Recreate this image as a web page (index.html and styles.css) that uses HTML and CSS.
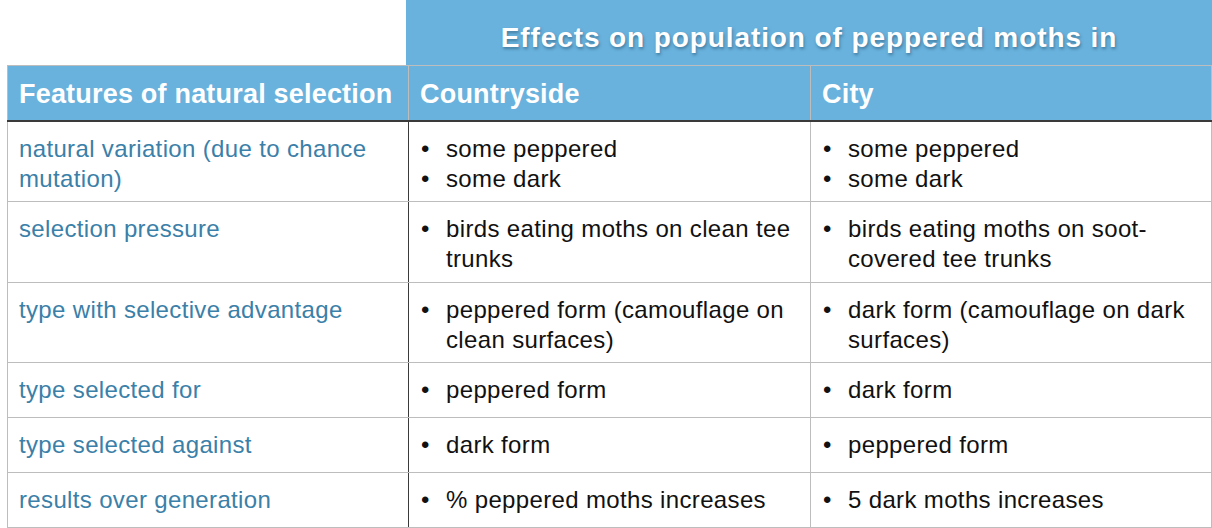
FILE: index.html
```html
<!DOCTYPE html>
<html>
<head>
<meta charset="utf-8">
<link rel="stylesheet" href="styles.css">
</head>
<body>
<div class="page">
  <div class="banner-row">
    <div class="spacer"></div>
    <div class="banner">Effects on population of peppered moths in</div>
  </div>
  <table class="grid">
    <colgroup><col class="c1"><col class="c2"><col class="c3"></colgroup>
    <thead>
      <tr>
        <th>Features of natural selection</th>
        <th>Countryside</th>
        <th>City</th>
      </tr>
    </thead>
    <tbody>
      <tr class="tall">
        <td class="feat">natural variation (due to chance mutation)</td>
        <td><ul><li>some peppered</li><li>some dark</li></ul></td>
        <td><ul><li>some peppered</li><li>some dark</li></ul></td>
      </tr>
      <tr class="tall">
        <td class="feat">selection pressure</td>
        <td><ul><li>birds eating moths on clean tee trunks</li></ul></td>
        <td><ul><li>birds eating moths on soot-covered tee trunks</li></ul></td>
      </tr>
      <tr class="tall">
        <td class="feat">type with selective advantage</td>
        <td><ul><li>peppered form (camouflage on clean surfaces)</li></ul></td>
        <td><ul><li>dark form (camouflage on dark surfaces)</li></ul></td>
      </tr>
      <tr class="short">
        <td class="feat">type selected for</td>
        <td><ul><li>peppered form</li></ul></td>
        <td><ul><li>dark form</li></ul></td>
      </tr>
      <tr class="short">
        <td class="feat">type selected against</td>
        <td><ul><li>dark form</li></ul></td>
        <td><ul><li>peppered form</li></ul></td>
      </tr>
      <tr class="short">
        <td class="feat">results over generation</td>
        <td><ul><li>% peppered moths increases</li></ul></td>
        <td><ul><li>5 dark moths increases</li></ul></td>
      </tr>
    </tbody>
  </table>
</div>
</body>
</html>
```
FILE: styles.css
```css
html, body {
  margin: 0;
  padding: 0;
  background: #ffffff;
}
body {
  font-family: "Liberation Sans", Arial, Helvetica, sans-serif;
  width: 1212px;
  height: 528px;
  overflow: hidden;
}
.page {
  display: flex;
  flex-direction: column;
}
.banner-row {
  display: flex;
  height: 65px;
}
.spacer {
  width: 406px;
  flex: none;
}
.banner {
  flex: 1;
  background: #68b2dd;
  color: #ffffff;
  font-weight: bold;
  font-size: 28px;
  letter-spacing: 0.9px;
  display: flex;
  align-items: center;
  justify-content: center;
  padding-top: 10px;
  box-sizing: border-box;
  text-shadow: 1px 2px 3px rgba(40, 80, 110, 0.55);
}
.grid {
  margin-left: 7px;
  width: 1204px;
  border-collapse: collapse;
  table-layout: fixed;
}
.c1 { width: 401px; }
.c2 { width: 402px; }
.c3 { width: 401px; }
.grid th {
  background: #68b2dd;
  color: #ffffff;
  font-weight: bold;
  font-size: 27px;
  letter-spacing: 0.2px;
  text-align: left;
  height: 55px;
  padding: 4px 0 0 11px;
  box-sizing: border-box;
  border-top: 1px solid #bdbdbd;
  border-left: 1px solid #bdbdbd;
  border-right: 1px solid #bdbdbd;
  border-bottom: 2px solid #3a3a3a;
  vertical-align: middle;
}
.grid td {
  font-size: 24px;
  letter-spacing: 0.35px;
  line-height: 30px;
  color: #111111;
  vertical-align: top;
  padding: 12px 11px 0 11px;
  box-sizing: border-box;
  border: 1px solid #bdbdbd;
}
.grid td:first-child {
  border-right: 1px solid #3a3a3a;
}
.grid td.feat {
  color: #3a80a8;
}
.tall td { height: 81px; }
.short td { height: 55px; }
.grid tbody tr:nth-child(3) td { height: 80px; }
ul {
  list-style: none;
  margin: 0;
  padding: 0;
}
li {
  position: relative;
  padding-left: 26px;
}
li::before {
  content: "•";
  position: absolute;
  left: 1px;
  top: 0;
  color: #111111;
}
```
